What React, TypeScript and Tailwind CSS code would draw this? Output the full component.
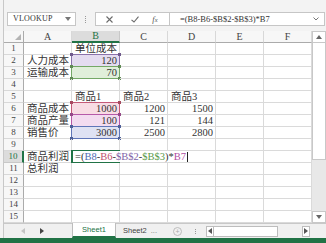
import React from "react";

type Ref = { bg: string; bd: string; dot: string };

const REF: Record<string, Ref> = {
  purple: { bg: "bg-[#e4dcf0]", bd: "border-[#8a72aa]", dot: "bg-[#6f5a8c]" },
  green: { bg: "bg-[#e0efda]", bd: "border-[#74a866]", dot: "bg-[#5f8a54]" },
  red: { bg: "bg-[#f8dce4]", bd: "border-[#c45a78]", dot: "bg-[#a5485f]" },
  magenta: { bg: "bg-[#f3dcf0]", bd: "border-[#b65aa8]", dot: "bg-[#944a88]" },
  blue: { bg: "bg-[#dfe2f3]", bd: "border-[#6076b8]", dot: "bg-[#4e6098]" },
};

type CellDef = { t?: React.ReactNode; num?: boolean; ref?: Ref; formula?: boolean };

const Formula = () => (
  <>
    <span>=(</span>
    <span className="text-[#4e6cb4]">B8</span>
    <span>-</span>
    <span className="text-[#c0506e]">B6</span>
    <span>-</span>
    <span className="text-[#7f63a8]">$B$2</span>
    <span>-</span>
    <span className="text-[#5a9a4a]">$B$3</span>
    <span>)*</span>
    <span className="text-[#b04ea2]">B7</span>
  </>
);

const DATA: Record<number, Record<string, CellDef>> = {
  1: { B: { t: "单位成本" } },
  2: { A: { t: "人力成本" }, B: { t: "120", num: true, ref: REF.purple } },
  3: { A: { t: "运输成本" }, B: { t: "70", num: true, ref: REF.green } },
  5: { B: { t: "商品1" }, C: { t: "商品2" }, D: { t: "商品3" } },
  6: {
    A: { t: "商品成本" },
    B: { t: "1000", num: true, ref: REF.red },
    C: { t: "1200", num: true },
    D: { t: "1500", num: true },
  },
  7: {
    A: { t: "商品产量" },
    B: { t: "100", num: true, ref: REF.magenta },
    C: { t: "121", num: true },
    D: { t: "144", num: true },
  },
  8: {
    A: { t: "销售价" },
    B: { t: "3000", num: true, ref: REF.blue },
    C: { t: "2500", num: true },
    D: { t: "2800", num: true },
  },
  10: { A: { t: "商品利润" }, B: { formula: true } },
  11: { A: { t: "总利润" } },
};

const COLS = ["A", "B", "C", "D", "E", "F"];

function Cell({ def }: { def?: CellDef }) {
  const ref = def?.ref;
  return (
    <div
      className={
        "relative w-[48px] h-[12px] border-r border-b border-[#dadada] text-[10.5px] leading-[11px] text-[#333] flex items-end " +
        (def?.num ? "justify-end pr-[2px] " : "justify-start pl-[3px] ") +
        (ref ? ref.bg : "")
      }
    >
      {ref && (
        <div className={"absolute -left-px -top-px w-[49px] h-[13px] border " + ref.bd}>
          <div className={"absolute -left-[2px] -top-[2px] w-[3px] h-[3px] " + ref.dot} />
          <div className={"absolute -right-[2px] -top-[2px] w-[3px] h-[3px] " + ref.dot} />
          <div className={"absolute -left-[2px] -bottom-[2px] w-[3px] h-[3px] " + ref.dot} />
          <div className={"absolute -right-[2px] -bottom-[2px] w-[3px] h-[3px] " + ref.dot} />
        </div>
      )}
      {def?.formula ? (
        <>
          <div className="absolute -left-px -top-px w-[49px] h-[13px] border-2 border-[#217346]" />
          <div className="absolute left-px top-0 h-[11px] z-10 bg-white whitespace-nowrap flex items-end pl-[2px] pr-[1px] text-[#333]">
            <Formula />
            <span className="inline-block w-px h-[10px] bg-[#222] ml-[1px]" />
          </div>
        </>
      ) : (
        <span className="relative whitespace-nowrap">{def?.t}</span>
      )}
    </div>
  );
}

function Tri({ dir, color }: { dir: "up" | "down" | "left" | "right"; color: string }) {
  const pts =
    dir === "up"
      ? "0,4 6,4 3,0"
      : dir === "down"
      ? "0,0 6,0 3,4"
      : dir === "left"
      ? "4,0 4,6 0,3"
      : "0,0 0,6 4,3";
  const w = dir === "up" || dir === "down" ? 6 : 4;
  const h = dir === "up" || dir === "down" ? 4 : 6;
  return (
    <svg width={w} height={h} viewBox={`0 0 ${w} ${h}`}>
      <polygon points={pts} fill={color} />
    </svg>
  );
}

export default function App() {
  return (
    <div className="w-[326px] h-[243px] overflow-hidden flex flex-col bg-[#f3f3f3] font-['Liberation_Serif','Noto_Sans_CJK_SC',serif]">
      {/* formula bar */}
      <div className="h-[31px] flex items-start pt-[12px] pl-[3px] pr-[1px] border-l border-[#c8c8c8] ml-[3px]">
        <div className="w-[69px] h-[14px] bg-white border border-[#c6c6c6] flex items-center justify-between pl-[5px] pr-[4px]">
          <span className="text-[8px] leading-[8px] text-[#333] tracking-[0.2px]">VLOOKUP</span>
          <Tri dir="down" color="#777" />
        </div>
        <div className="w-[19px] h-[14px] flex flex-col items-center justify-center gap-[1px]">
          <div className="w-px h-px bg-[#999]" />
          <div className="w-px h-px bg-[#999]" />
          <div className="w-px h-px bg-[#999]" />
          <div className="w-px h-px bg-[#999]" />
        </div>
        <div className="w-[74px] h-[14px] bg-white border-y border-l border-[#c6c6c6] flex items-center">
          <div className="w-[26px] flex justify-center">
            <svg width="7" height="7" viewBox="0 0 7 7">
              <path d="M0.5 0.5 L6.5 6.5 M6.5 0.5 L0.5 6.5" stroke="#6b6b6b" strokeWidth="1.1" />
            </svg>
          </div>
          <div className="w-[26px] flex justify-center">
            <svg width="8" height="7" viewBox="0 0 8 7">
              <path d="M0.5 3.8 L3 6 L7.5 0.7" stroke="#6b6b6b" strokeWidth="1.1" fill="none" />
            </svg>
          </div>
          <div className="w-[14px] flex justify-center">
            <span className="italic text-[8.5px] leading-[8px] text-[#555]">
              f<span className="text-[6.5px]">x</span>
            </span>
          </div>
        </div>
        <div className="flex-1 h-[14px] bg-white border border-[#c6c6c6] flex items-center justify-between pl-[10px] pr-[5px]">
          <span className="text-[8.5px] leading-[9px] text-[#333] whitespace-nowrap">=(B8-B6-$B$2-$B$3)*B7</span>
          <svg width="6" height="4" viewBox="0 0 6 4">
            <path d="M0.5 0.5 L3 3 L5.5 0.5" stroke="#777" strokeWidth="1" fill="none" />
          </svg>
        </div>
      </div>

      {/* sheet area */}
      <div className="flex h-[192px]">
        <div className="ml-[3px] w-[309px] border-l border-[#c8c8c8] bg-white flex flex-col">
          {/* column headers */}
          <div className="flex h-[12px]">
            <div className="relative w-[20px] h-[12px] bg-[#f7f7f7] border-r border-b border-[#ababab]">
              <div className="absolute right-[2px] bottom-[2px]">
                <svg width="6" height="6" viewBox="0 0 6 6">
                  <polygon points="6,0 6,6 0,6" fill="#b4b4b4" />
                </svg>
              </div>
            </div>
            {COLS.map((c) =>
              c === "B" ? (
                <div
                  key={c}
                  className="w-[48px] h-[12px] bg-[#dcdcdc] border-r border-[#c8c8c8] border-b-2 border-b-[#217346] flex items-center justify-center text-[10px] leading-[10px] text-[#217346]"
                >
                  {c}
                </div>
              ) : (
                <div
                  key={c}
                  className="w-[48px] h-[12px] bg-[#f7f7f7] border-r border-[#d8d8d8] border-b border-b-[#ababab] flex items-center justify-center text-[10px] leading-[10px] text-[#444]"
                >
                  {c}
                </div>
              )
            )}
          </div>
          {Array.from({ length: 15 }, (_, i) => i + 1).map((r) => (
            <div key={r} className="flex h-[12px]">
              {r === 10 ? (
                <div className="w-[20px] h-[12px] bg-[#dcdcdc] border-b border-[#c8c8c8] border-r-2 border-r-[#217346] flex items-center justify-center text-[9px] leading-[9px] text-[#217346]">
                  {r}
                </div>
              ) : (
                <div className="w-[20px] h-[12px] bg-[#f7f7f7] border-b border-[#d8d8d8] border-r border-r-[#ababab] flex items-center justify-center text-[9px] leading-[9px] text-[#444]">
                  {r}
                </div>
              )}
              {COLS.map((c) => (
                <Cell key={c} def={DATA[r]?.[c]} />
              ))}
            </div>
          ))}
        </div>
        {/* vertical scrollbar */}
        <div className="w-[14px] flex flex-col bg-[#e8e8e8]">
          <div className="h-[12px] bg-white border border-[#c8c8c8] flex items-center justify-center">
            <Tri dir="up" color="#666" />
          </div>
          <div className="h-[117px] bg-white border-x border-b border-[#c8c8c8]" />
          <div className="flex-1" />
          <div className="h-[12px] bg-white border border-[#c8c8c8] flex items-center justify-center">
            <Tri dir="down" color="#666" />
          </div>
        </div>
      </div>

      {/* tab bar */}
      <div className="h-[15px] flex items-stretch bg-[#f0f0f0] border-t border-[#c8c8c8] ml-[3px] border-l border-l-[#c8c8c8] font-['Liberation_Sans',sans-serif]">
        <div className="w-[68px] flex items-center pl-[17px] gap-[15px]">
          <Tri dir="left" color="#c4c4c4" />
          <Tri dir="right" color="#444" />
        </div>
        <div className="w-[44px] -mt-px bg-white border-x border-[#bdbdbd] border-b-2 border-b-[#217346] flex items-center justify-center text-[7.5px] leading-[8px] text-[#217346]">
          Sheet1
        </div>
        <div className="pl-[7px] flex items-center text-[7.5px] leading-[8px] text-[#444] whitespace-nowrap">
          Sheet2
          <span className="ml-[4px] text-[#777]">...</span>
        </div>
        <div className="ml-[16px] flex items-center">
          <div className="w-[9px] h-[9px] rounded-full border border-[#bdbdbd] flex items-center justify-center text-[7px] leading-[7px] text-[#aaa]">
            +
          </div>
        </div>
        <div className="ml-[13px] flex flex-col items-center justify-center gap-[1px]">
          <div className="w-px h-px bg-[#999]" />
          <div className="w-px h-px bg-[#999]" />
          <div className="w-px h-px bg-[#999]" />
        </div>
        <div className="ml-[10px] flex items-center">
          <div className="w-[8px] h-[11px] bg-white border border-[#bdbdbd] flex items-center justify-center">
            <Tri dir="left" color="#555" />
          </div>
          <div className="w-[64px] h-[11px] bg-white border-y border-r border-[#bdbdbd]" />
          <div className="w-[24px] h-[11px]" />
          <div className="w-[8px] h-[11px] bg-white border border-[#bdbdbd] flex items-center justify-center">
            <Tri dir="right" color="#555" />
          </div>
        </div>
      </div>
      <div className="h-[5px] bg-[#217346]" />
    </div>
  );
}
